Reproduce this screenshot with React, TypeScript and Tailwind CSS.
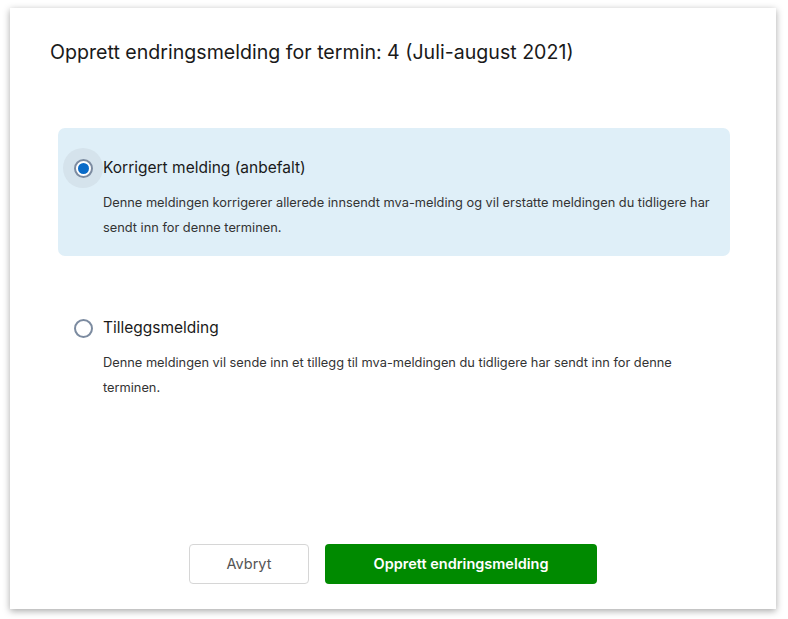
import React from "react";

const font = { fontFamily: "Inter, 'Noto Sans', sans-serif" };

function Radio({ checked }: { checked: boolean }) {
  return (
    <div
      className={`w-[40px] h-[40px] rounded-full flex items-center justify-center shrink-0 ${
        checked ? "bg-[#d5e3ec]" : ""
      }`}
    >
      <div className="w-[19px] h-[19px] rounded-full border-2 border-[#7c8ba0] bg-white flex items-center justify-center">
        {checked && <div className="w-[11px] h-[11px] rounded-full bg-[#0a6bc8]" />}
      </div>
    </div>
  );
}

function Option({
  checked,
  label,
  children,
}: {
  checked: boolean;
  label: string;
  children: React.ReactNode;
}) {
  return (
    <div
      className={`h-[128px] rounded-[7px] pt-[20px] pl-[5px] pr-[4px] ${
        checked ? "bg-[#dfeff8]" : ""
      }`}
    >
      <div className="flex items-center">
        <Radio checked={checked} />
        <span className="text-[15.5px] text-[#1a1a1a]">{label}</span>
      </div>
      <p className="pl-[40px] mt-[2px] text-[12.8px] leading-[25px] text-[#333]">{children}</p>
    </div>
  );
}

export default function App() {
  return (
    <main className="min-h-screen bg-white pt-[8px] pl-[10px]" style={font}>
      <div className="w-[766px] h-[601px] bg-white shadow-[0_2px_7px_rgba(0,0,0,0.35)] flex flex-col">
        <h1 className="pt-[31px] pl-[40px] text-[19.6px] leading-[26px] text-[#1a1a1a]">
          Opprett endringsmelding for termin: 4 (Juli-august 2021)
        </h1>

        <div className="mt-[63px] pl-[48px] pr-[46px] flex flex-col gap-[32px]">
          <Option checked label="Korrigert melding (anbefalt)">
            Denne meldingen korrigerer allerede innsendt mva-melding og vil erstatte meldingen du tidligere har
            <br />
            sendt inn for denne terminen.
          </Option>
          <Option checked={false} label="Tilleggsmelding">
            Denne meldingen vil sende inn et tillegg til mva-meldingen du tidligere har sendt inn for denne
            <br />
            terminen.
          </Option>
        </div>

        <div className="mt-auto pb-[25px] flex justify-center gap-[16px]">
          <button className="w-[120px] h-[40px] rounded-[4px] border border-[#d6d6d6] bg-white text-[14.5px] text-[#555]">
            Avbryt
          </button>
          <button className="w-[272px] h-[40px] rounded-[4px] bg-[#008a00] text-[14.5px] font-semibold text-white">
            Opprett endringsmelding
          </button>
        </div>
      </div>
    </main>
  );
}
